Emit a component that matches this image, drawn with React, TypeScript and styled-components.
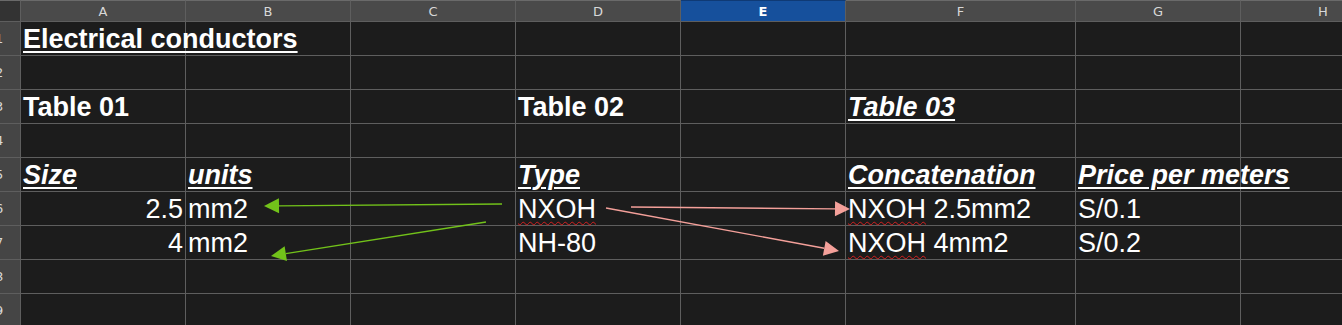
import styled, { createGlobalStyle } from 'styled-components';

const GlobalStyle = createGlobalStyle`
  html, body {
    margin: 0;
    padding: 0;
    background: #1c1c1c;
    overflow: hidden;
  }
`;

const LINE = '#5e5e5e';

const Sheet = styled.div`
  position: relative;
  width: 1342px;
  height: 325px;
  overflow: hidden;
  background: #1c1c1c;
  font-family: 'Liberation Sans', Arial, sans-serif;
`;

const Grid = styled.div`
  display: grid;
  grid-template-columns: 21px 165px 165px 165px 165px 165px 230px 165px 165px;
  grid-template-rows: 22px repeat(9, 34px);
`;

const Corner = styled.div`
  background: #333333;
  border-top: 1px solid #6a6a6a;
  border-right: 1px solid ${LINE};
  border-bottom: 1px solid ${LINE};
`;

const ColHead = styled.div<{ $active?: boolean }>`
  display: flex;
  align-items: center;
  justify-content: center;
  background: ${(p) => (p.$active ? '#16509c' : '#4a4a4a')};
  border-top: 1px solid ${(p) => (p.$active ? '#0f3a75' : '#6a6a6a')};
  border-right: 1px solid ${LINE};
  border-bottom: 1px solid ${LINE};
  color: ${(p) => (p.$active ? '#ffffff' : '#d8d8d8')};
  font-family: 'DejaVu Sans', 'Liberation Sans', sans-serif;
  font-size: 13px;
  font-weight: ${(p) => (p.$active ? 700 : 400)};
`;

const RowHead = styled.div`
  display: flex;
  align-items: center;
  background: #454545;
  border-right: 1px solid ${LINE};
  border-bottom: 1px solid ${LINE};
  color: #d8d8d8;
  font-family: 'DejaVu Sans', 'Liberation Sans', sans-serif;
  font-size: 13px;
  overflow: hidden;
  span {
    margin-left: -5px;
  }
`;

const Cell = styled.div<{ $right?: boolean }>`
  display: flex;
  align-items: flex-end;
  justify-content: ${(p) => (p.$right ? 'flex-end' : 'flex-start')};
  padding: 0 2px;
  border-right: 1px solid ${LINE};
  border-bottom: 1px solid ${LINE};
  color: #ffffff;
  font-size: 27px;
  line-height: 31px;
  white-space: nowrap;
  overflow: visible;
  min-width: 0;
`;

const Title = styled.span<{ $italic?: boolean; $underline?: boolean }>`
  font-weight: 700;
  font-style: ${(p) => (p.$italic ? 'italic' : 'normal')};
  text-decoration: ${(p) => (p.$underline ? 'underline' : 'none')};
  text-decoration-thickness: 2px;
  text-underline-offset: 3px;
`;

const Misspelt = styled.span`
  text-decoration: underline wavy #d42020;
  text-decoration-thickness: 1px;
  text-decoration-skip-ink: none;
  text-underline-offset: 3px;
`;

const Overlay = styled.svg`
  position: absolute;
  left: 0;
  top: 0;
  pointer-events: none;
`;

const columns = ['A', 'B', 'C', 'D', 'E', 'F', 'G', 'H'];

type Arrow = { x1: number; y1: number; x2: number; y2: number; color: string };

const arrows: Arrow[] = [
  { x1: 502, y1: 204, x2: 264, y2: 206, color: '#72c21a' },
  { x1: 486, y1: 222, x2: 271, y2: 256, color: '#72c21a' },
  { x1: 631, y1: 207, x2: 850, y2: 209, color: '#f4a09a' },
  { x1: 606, y1: 208, x2: 839, y2: 251, color: '#f4a09a' },
];

const ArrowLine = ({ x1, y1, x2, y2, color }: Arrow) => {
  const dx = x2 - x1;
  const dy = y2 - y1;
  const len = Math.hypot(dx, dy);
  const ux = dx / len;
  const uy = dy / len;
  const bx = x2 - ux * 15;
  const by = y2 - uy * 15;
  const px = -uy * 7.5;
  const py = ux * 7.5;
  return (
    <g>
      <line x1={x1} y1={y1} x2={bx} y2={by} stroke={color} strokeWidth={1.4} />
      <polygon
        points={`${x2},${y2} ${bx + px},${by + py} ${bx - px},${by - py}`}
        fill={color}
      />
    </g>
  );
};

type Row = (JSX.Element | null)[];

const rows: Row[] = [
  [<Title $underline>Electrical conductors</Title>],
  [],
  [<Title>Table 01</Title>, null, null, <Title>Table 02</Title>, null, <Title $italic $underline>Table 03</Title>],
  [],
  [
    <Title $italic $underline>Size</Title>,
    <Title $italic $underline>units</Title>,
    null,
    <Title $italic $underline>Type</Title>,
    null,
    <Title $italic $underline>Concatenation</Title>,
    <Title $italic $underline>Price per meters</Title>,
  ],
  [
    <span>2.5</span>,
    <span>mm2</span>,
    null,
    <Misspelt>NXOH</Misspelt>,
    null,
    <span><Misspelt>NXOH</Misspelt> 2.5mm2</span>,
    <span>S/0.1</span>,
  ],
  [
    <span>4</span>,
    <span>mm2</span>,
    null,
    <span>NH-80</span>,
    null,
    <span><Misspelt>NXOH</Misspelt> 4mm2</span>,
    <span>S/0.2</span>,
  ],
  [],
  [],
];

const App = () => (
  <Sheet>
    <GlobalStyle />
    <Grid>
      <Corner />
      {columns.map((c) => (
        <ColHead key={c} $active={c === 'E'}>{c}</ColHead>
      ))}
      {rows.map((row, r) => [
        <RowHead key={`h${r}`}><span>{r + 1}</span></RowHead>,
        ...columns.map((c, i) => (
          <Cell key={`${c}${r}`} $right={i === 0 && (r === 5 || r === 6)}>
            {row[i] ?? null}
          </Cell>
        )),
      ])}
    </Grid>
    <Overlay width={1342} height={325} viewBox="0 0 1342 325">
      {arrows.map((a, i) => (
        <ArrowLine key={i} {...a} />
      ))}
    </Overlay>
  </Sheet>
);

export default App;
